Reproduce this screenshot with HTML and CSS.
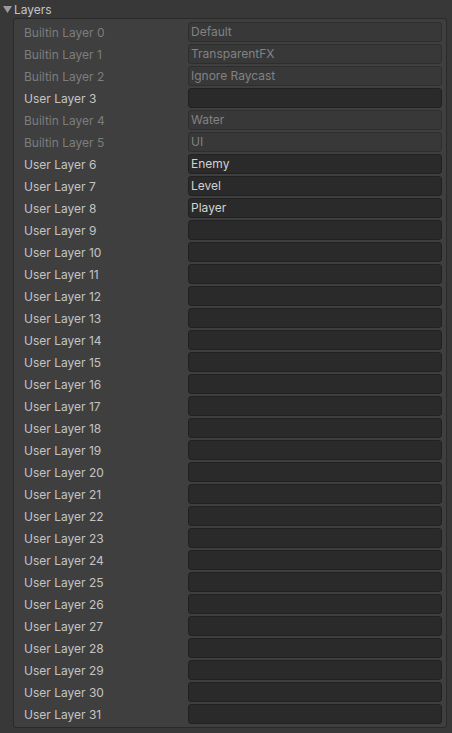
FILE: index.html
```html
<!DOCTYPE html>
<html>
<head>
<meta charset="utf-8">
<link rel="stylesheet" href="styles.css">
</head>
<body>
<div class="header">
  <svg class="arrow" width="9" height="8" viewBox="0 0 9 8"><polygon points="0,0 9,0 4.5,7" fill="#9a9a9a"/></svg>
  <span class="title">Layers</span>
</div>
<div class="panel">
  <div class="row dis"><span class="label">Builtin Layer 0</span><span class="field">Default</span></div>
  <div class="row dis"><span class="label">Builtin Layer 1</span><span class="field">TransparentFX</span></div>
  <div class="row dis"><span class="label">Builtin Layer 2</span><span class="field">Ignore Raycast</span></div>
  <div class="row"><span class="label">User Layer 3</span><span class="field"></span></div>
  <div class="row dis"><span class="label">Builtin Layer 4</span><span class="field">Water</span></div>
  <div class="row dis"><span class="label">Builtin Layer 5</span><span class="field">UI</span></div>
  <div class="row"><span class="label">User Layer 6</span><span class="field">Enemy</span></div>
  <div class="row"><span class="label">User Layer 7</span><span class="field">Level</span></div>
  <div class="row"><span class="label">User Layer 8</span><span class="field">Player</span></div>
  <div class="row"><span class="label">User Layer 9</span><span class="field"></span></div>
  <div class="row"><span class="label">User Layer 10</span><span class="field"></span></div>
  <div class="row"><span class="label">User Layer 11</span><span class="field"></span></div>
  <div class="row"><span class="label">User Layer 12</span><span class="field"></span></div>
  <div class="row"><span class="label">User Layer 13</span><span class="field"></span></div>
  <div class="row"><span class="label">User Layer 14</span><span class="field"></span></div>
  <div class="row"><span class="label">User Layer 15</span><span class="field"></span></div>
  <div class="row"><span class="label">User Layer 16</span><span class="field"></span></div>
  <div class="row"><span class="label">User Layer 17</span><span class="field"></span></div>
  <div class="row"><span class="label">User Layer 18</span><span class="field"></span></div>
  <div class="row"><span class="label">User Layer 19</span><span class="field"></span></div>
  <div class="row"><span class="label">User Layer 20</span><span class="field"></span></div>
  <div class="row"><span class="label">User Layer 21</span><span class="field"></span></div>
  <div class="row"><span class="label">User Layer 22</span><span class="field"></span></div>
  <div class="row"><span class="label">User Layer 23</span><span class="field"></span></div>
  <div class="row"><span class="label">User Layer 24</span><span class="field"></span></div>
  <div class="row"><span class="label">User Layer 25</span><span class="field"></span></div>
  <div class="row"><span class="label">User Layer 26</span><span class="field"></span></div>
  <div class="row"><span class="label">User Layer 27</span><span class="field"></span></div>
  <div class="row"><span class="label">User Layer 28</span><span class="field"></span></div>
  <div class="row"><span class="label">User Layer 29</span><span class="field"></span></div>
  <div class="row"><span class="label">User Layer 30</span><span class="field"></span></div>
  <div class="row"><span class="label">User Layer 31</span><span class="field"></span></div>
</div>
</body>
</html>
```

FILE: styles.css
```css
html, body {
  margin: 0;
  padding: 0;
  background: #383838;
  font-family: Inter, "Noto Sans", sans-serif;
  font-size: 12px;
  color: #c4c4c4;
}
body {
  width: 452px;
  height: 733px;
  overflow: hidden;
}
.header {
  display: flex;
  align-items: center;
  height: 18px;
  padding-left: 3px;
}
.arrow {
  margin-right: 2px;
  margin-top: 1px;
}
.title {
  color: #c4c4c4;
}
.panel {
  margin-left: 13px;
  width: 432px;
  border: 1px solid #2a2a2a;
  border-radius: 3px;
  background: #3f3f3f;
  padding: 2px 0 2px 0;
}
.row {
  display: grid;
  grid-template-columns: 164px 254px;
  align-items: center;
  height: 22px;
  padding-left: 10px;
}
.label {
  color: #c4c4c4;
  white-space: nowrap;
}
.field {
  box-sizing: border-box;
  height: 20px;
  line-height: 18px;
  border: 1px solid #212121;
  border-radius: 3px;
  background: #2a2a2a;
  color: #d2d2d2;
  padding-left: 2px;
}
.dis .label {
  color: #7d7d7d;
}
.dis .field {
  background: #383838;
  border-color: #2e2e2e;
  color: #828282;
}
```
